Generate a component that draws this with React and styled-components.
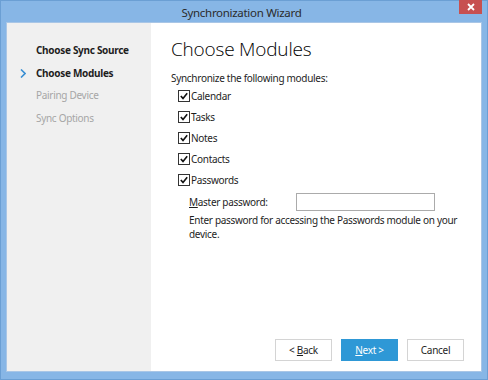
import React from 'react';
import styled, { createGlobalStyle } from 'styled-components';

const GlobalStyle = createGlobalStyle`
  html, body {
    margin: 0;
    padding: 0;
    background: #87b6e6;
  }
  body {
    font-family: 'Noto Sans', 'Open Sans', sans-serif;
    letter-spacing: -0.3px;
  }
`;

const Window = styled.div`
  box-sizing: border-box;
  width: 488px;
  height: 380px;
  background: #87b6e6;
  border: 1px solid #6b9fd4;
  display: flex;
  flex-direction: column;
`;

const TitleBar = styled.div`
  height: 21px;
  display: grid;
  grid-template-columns: 1fr auto 1fr;
  align-items: start;
  padding-right: 5px;
`;

const Title = styled.div`
  grid-column: 2;
  font-size: 11.5px;
  line-height: 23px;
  color: #2b2b2b;
`;

const CloseButton = styled.div`
  grid-column: 3;
  justify-self: end;
  width: 23px;
  height: 14px;
  margin-top: -1px;
  background: #c75050;
  display: flex;
  align-items: center;
  justify-content: center;
`;

const Body = styled.div`
  flex: 1;
  display: flex;
  margin: 0 5px 7px 5px;
  border: 1px solid #a9c6e6;
  background: #fff;
`;

const Sidebar = styled.div`
  width: 144px;
  background: #f0f0f0;
  padding-top: 16px;
  display: flex;
  flex-direction: column;
`;

const Step = styled.div`
  position: relative;
  height: 22.5px;
  line-height: 22.5px;
  padding-left: 29px;
  font-size: 10px;
  font-weight: ${({ state }) => (state === 'done' || state === 'active' ? 700 : 400)};
  color: ${({ state }) => (state === 'pending' ? '#a6a6a6' : '#1e1e1e')};
`;

const Chevron = styled.svg`
  position: absolute;
  left: 13px;
  top: 7px;
`;

const Main = styled.div`
  flex: 1;
  display: flex;
  flex-direction: column;
  padding: 12px 17px 10px 20px;
`;

const Heading = styled.h1`
  margin: 0;
  font-family: 'Open Sans', 'Noto Sans', sans-serif;
  font-size: 19px;
  font-weight: 300;
  letter-spacing: -0.2px;
  color: #000;
  line-height: 28px;
`;

const Intro = styled.div`
  margin-top: 8px;
  font-size: 10px;
  color: #1e1e1e;
  line-height: 15px;
`;

const ModuleList = styled.div`
  margin-top: -1px;
  padding-left: 7px;
  display: flex;
  flex-direction: column;
`;

const CheckRow = styled.label`
  display: flex;
  align-items: center;
  height: 21px;
  font-size: 10px;
  color: #1e1e1e;
  gap: 1px;
`;

const Box = styled.span`
  box-sizing: border-box;
  width: 12px;
  height: 12px;
  border: 1px solid #333;
  background: #fff;
  display: flex;
  align-items: center;
  justify-content: center;
`;

const PasswordBlock = styled.div`
  padding-left: 18px;
  margin-top: 3px;
`;

const PasswordRow = styled.div`
  display: grid;
  grid-template-columns: 107px 139px;
  align-items: center;
  font-size: 10px;
  color: #1e1e1e;
`;

const Underline = styled.span`
  text-decoration: underline;
`;

const Input = styled.div`
  box-sizing: border-box;
  height: 18px;
  border: 1px solid #ababab;
  background: #fff;
`;

const Hint = styled.div`
  margin-top: 2px;
  font-size: 10px;
  line-height: 14px;
  color: #1e1e1e;
  width: 275px;
`;

const Buttons = styled.div`
  margin-top: auto;
  display: flex;
  justify-content: flex-end;
  gap: 9px;
`;

const Button = styled.div`
  box-sizing: border-box;
  width: 57px;
  height: 22px;
  display: flex;
  align-items: center;
  justify-content: center;
  font-size: 10px;
  color: ${({ primary }) => (primary ? '#fff' : '#1e1e1e')};
  background: ${({ primary }) => (primary ? '#2e98d6' : '#fff')};
  border: 1px solid ${({ primary }) => (primary ? '#2e98d6' : '#d4d4d4')};
`;

const Check = () => (
  <Box>
    <svg width="8" height="8" viewBox="0 0 8 8">
      <path d="M0.8 4 L3 6.4 L7.2 1.2" fill="none" stroke="#111" strokeWidth="1.6" />
    </svg>
  </Box>
);

const modules = ['Calendar', 'Tasks', 'Notes', 'Contacts', 'Passwords'];

const App = () => (
  <>
    <GlobalStyle />
    <Window>
      <TitleBar>
        <Title>Synchronization Wizard</Title>
        <CloseButton>
          <svg width="8" height="8" viewBox="0 0 8 8">
            <path d="M1 1 L7 7 M7 1 L1 7" stroke="#fff" strokeWidth="1.8" />
          </svg>
        </CloseButton>
      </TitleBar>
      <Body>
        <Sidebar>
          <Step state="done">Choose Sync Source</Step>
          <Step state="active">
            <Chevron width="6" height="9" viewBox="0 0 6 9">
              <path d="M1 0.5 L5 4.5 L1 8.5" fill="none" stroke="#3a8fd3" strokeWidth="1.6" />
            </Chevron>
            Choose Modules
          </Step>
          <Step state="pending">Pairing Device</Step>
          <Step state="pending">Sync Options</Step>
        </Sidebar>
        <Main>
          <Heading>Choose Modules</Heading>
          <Intro>Synchronize the following modules:</Intro>
          <ModuleList>
            {modules.map((m) => (
              <CheckRow key={m}>
                <Check />
                {m}
              </CheckRow>
            ))}
          </ModuleList>
          <PasswordBlock>
            <PasswordRow>
              <span>
                <Underline>M</Underline>aster password:
              </span>
              <Input />
            </PasswordRow>
            <Hint>Enter password for accessing the Passwords module on your device.</Hint>
          </PasswordBlock>
          <Buttons>
            <Button>
              &lt;&nbsp;<Underline>B</Underline>ack
            </Button>
            <Button primary>
              <Underline>N</Underline>ext &gt;
            </Button>
            <Button>Cancel</Button>
          </Buttons>
        </Main>
      </Body>
    </Window>
  </>
);

export default App;
